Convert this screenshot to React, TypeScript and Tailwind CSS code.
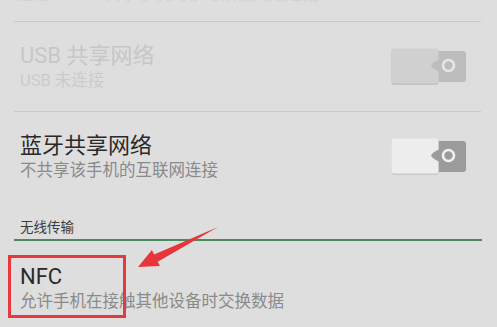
import React from "react";

const font = { fontFamily: "Roboto, 'Noto Sans CJK SC', sans-serif" };

function Toggle({ disabled }: { disabled?: boolean }) {
  const thumb = disabled ? "#d0d0d0" : "#ededed";
  const edge = disabled ? "#c2c2c2" : "#c9c9c9";
  const track = disabled ? "#bdbdbd" : "#9b9b9b";
  const ring = disabled ? "#e6e6e6" : "#f0f0f0";
  return (
    <svg width="76" height="38" viewBox="0 0 76 38">
      <rect x="45" y="3" width="30" height="31" rx="3" fill={track} />
      <rect x="0.5" y="1" width="47" height="36" rx="3" fill={edge} />
      <rect x="0.5" y="0.5" width="47" height="35" rx="3" fill={thumb} />
      <path d="M48 11.5 Q42 14 40 17.5 Q42 21 48 23.5 Z" fill={track} />
      <circle cx="57.5" cy="17.5" r="5.5" fill="none" stroke={ring} strokeWidth="2.6" />
    </svg>
  );
}

function SettingRow({
  title,
  summary,
  disabled,
  toggle,
}: {
  title: string;
  summary: string;
  disabled?: boolean;
  toggle?: boolean;
}) {
  return (
    <div className="flex h-[89px] items-center justify-between pl-[20px] pr-[30px]">
      <div className="flex flex-col">
        <div
          className={`text-[22px] leading-[28px] ${disabled ? "text-[#c7c7c7]" : "text-[#2a2a2a]"}`}
        >
          {title}
        </div>
        <div
          className={`text-[16.5px] leading-[22px] ${disabled ? "text-[#cbcbcb]" : "text-[#8a8a8a]"}`}
        >
          {summary}
        </div>
      </div>
      {toggle && <Toggle disabled={disabled} />}
    </div>
  );
}

export default function App() {
  return (
    <div
      className="relative h-[327px] w-[497px] overflow-hidden bg-[#dedede]"
      style={font}
    >
      {/* 上一项的说明，只露出下半截 */}
      <div className="h-[21px] overflow-hidden pl-[17px]">
        <div className="-mt-[16px] text-[16.5px] leading-[22px] text-[#d3d3d3]">
          通过 WLAN 共享手机的移动数据网络连接
        </div>
      </div>
      <div className="mx-[14px] mr-[16px] h-px bg-[#c9c9c9]" />

      <SettingRow title="USB 共享网络" summary="USB 未连接" disabled toggle />
      <div className="ml-[14px] mr-[16px] h-px bg-[#cacaca]" />

      <SettingRow title="蓝牙共享网络" summary="不共享该手机的互联网连接" toggle />

      <div className="pl-[20px] pt-[17px] pb-[3px] text-[13.5px] leading-[18px] text-[#3c3c3c]">
        无线传输
      </div>
      <div className="ml-[14px] mr-[15px] h-[2px] bg-[#4b8a60]" />

      <div className="pl-[20px] pt-[22px]">
        <div className="text-[22px] leading-[28px] text-[#2a2a2a]">NFC</div>
        <div className="text-[16.5px] leading-[22px] text-[#8a8a8a]">
          允许手机在接触其他设备时交换数据
        </div>
      </div>

      {/* 标注：红框和箭头 */}
      <div className="absolute left-[8px] top-[255px] h-[63px] w-[118px] border-[3px] border-[#e6393e]" />
      <svg
        className="pointer-events-none absolute inset-0"
        width="497"
        height="327"
        viewBox="0 0 497 327"
      >
        <polygon
          points="218,227 154.1,254.5 151.9,250 138,267 159.9,266.1 157.7,261.7"
          fill="#e8353b"
        />
      </svg>
    </div>
  );
}
